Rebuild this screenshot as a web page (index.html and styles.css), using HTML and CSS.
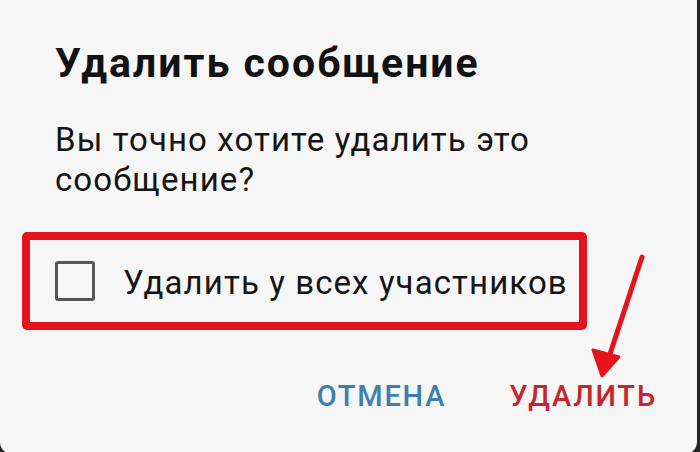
FILE: index.html
```html
<!DOCTYPE html>
<html lang="ru">
<head>
<meta charset="utf-8">
<link rel="stylesheet" href="styles.css">
</head>
<body>
<div class="dialog">
  <h1 class="title">Удалить сообщение</h1>
  <p class="message">Вы точно хотите удалить это<br>сообщение?</p>
  <div class="highlight">
    <span class="checkbox"></span>
    <span class="label">Удалить у всех участников</span>
  </div>
  <div class="actions">
    <span class="btn cancel">ОТМЕНА</span>
    <span class="btn delete">УДАЛИТЬ</span>
  </div>
  <svg class="arrow" width="80" height="160" viewBox="0 0 80 160">
    <line x1="62" y1="17" x2="28" y2="120" stroke="#e5141b" stroke-width="5" stroke-linecap="round"/>
    <polygon points="22,136 13,110 39,117" fill="#e5141b" stroke="#e5141b" stroke-width="3" stroke-linejoin="round"/>
  </svg>
</div>
</body>
</html>
```

FILE: styles.css
```css
html, body {
  margin: 0;
  padding: 0;
}
body {
  background: #262626;
  width: 700px;
  height: 452px;
  overflow: hidden;
  font-family: Roboto, "Liberation Sans", sans-serif;
}
.dialog {
  position: relative;
  width: 697px;
  height: 454px;
  box-sizing: border-box;
  background: #f6f6f6;
  border-radius: 0 0 12px 12px;
  padding: 40px 0 0 0;
}
.title {
  margin: 0 0 0 55px;
  font-size: 41px;
  line-height: 46px;
  letter-spacing: 2px;
  font-weight: 700;
  color: #121212;
}
.message {
  margin: 34px 0 0 55px;
  font-size: 33px;
  line-height: 40px;
  letter-spacing: 1.1px;
  color: #141414;
}
.highlight {
  margin: 32px 0 0 22px;
  width: 565px;
  height: 98px;
  box-sizing: border-box;
  border: 8px solid #e3141c;
  border-radius: 5px;
  display: flex;
  align-items: center;
  padding-left: 25px;
  gap: 28px;
}
.checkbox {
  width: 40px;
  height: 40px;
  box-sizing: border-box;
  border: 3px solid #575757;
  border-radius: 3px;
  flex: none;
}
.label {
  font-size: 33px;
  line-height: 40px;
  letter-spacing: 1.1px;
  color: #151515;
  padding-top: 3px;
}
.actions {
  margin-top: 49px;
  display: flex;
  justify-content: flex-end;
  gap: 63px;
  padding-right: 40px;
}
.btn {
  font-size: 29px;
  line-height: 34px;
  letter-spacing: 1.8px;
  font-weight: 500;
}
.cancel {
  color: #3d7fae;
}
.delete {
  color: #c5262e;
}
.arrow {
  position: absolute;
  left: 580px;
  top: 240px;
}
```
